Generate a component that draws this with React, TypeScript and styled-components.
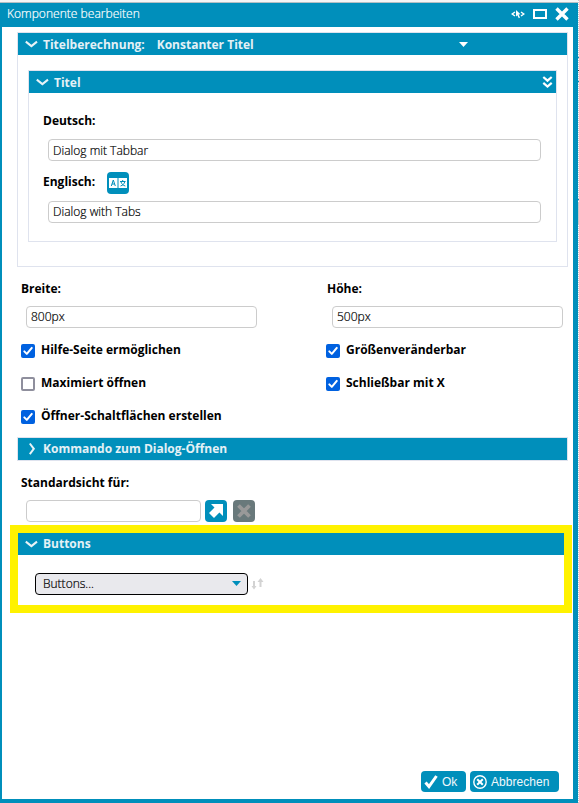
import React from "react";
import styled, { createGlobalStyle } from "styled-components";

const BLUE = "#008fbb";

const GlobalStyle = createGlobalStyle`
  * { box-sizing: border-box; }
  body { margin: 0; background: #fff; overflow: hidden; }
  svg { display: block; flex: none; }
`;

const Page = styled.div`
  display: flex;
  width: 579px;
  height: 803px;
  font-family: "Open Sans", "Noto Sans", sans-serif;
  font-size: 12px;
  color: #000;
`;

const Dialog = styled.div`
  display: flex;
  flex-direction: column;
  width: 578px;
  height: 803px;
  border-top: 2px solid #f5f5f5;
`;

const PageEdge = styled.div`
  width: 1px;
  background:
    linear-gradient(#333, #333) 0 70px / 1px 1px no-repeat,
    linear-gradient(${BLUE}, ${BLUE}) 0 57px / 1px 1px no-repeat,
    linear-gradient(${BLUE}, ${BLUE}) 0 81px / 1px 1px no-repeat,
    linear-gradient(${BLUE}, ${BLUE}) 0 199px / 1px 1px no-repeat,
    linear-gradient(#c8c8c8, #c8c8c8) 0 202px / 1px 23px no-repeat,
    repeating-linear-gradient(#c4c8ca 0 1px, #fff 1px 2px);
`;

const TitleBar = styled.header`
  display: flex;
  align-items: center;
  height: 25px;
  padding: 0 2px 0 7px;
  border-top: 1px solid #b5bfc3;
  background: ${BLUE};
  color: #fff;
`;

const TitleText = styled.span`
  flex: 1;
  line-height: 16px;
  margin-top: -3px;
  font-weight: 300;
  letter-spacing: 0.03px;
  -webkit-text-stroke: 0.2px #fff;
  white-space: nowrap;
`;

const WindowIcons = styled.div`
  display: flex;
  align-items: center;
  gap: 7px;
  margin-top: -3px;
`;

const Body = styled.main`
  display: flex;
  flex-direction: column;
  flex: 1;
  padding: 5px 5px 7px 15px;
  border: solid ${BLUE};
  border-width: 0 5px 4px 2px;
  background: #fff;
`;

const Group = styled.section<{ $height: number }>`
  flex: none;
  height: ${(p) => p.$height}px;
  border: 1px solid #dfe3ee;
`;

const GroupHeader = styled.div`
  display: flex;
  align-items: center;
  height: 22px;
  padding: 0 3px 0 7px;
  background: ${BLUE};
  color: #e4f1f6;
`;

const HeaderText = styled.span<{ $gap?: number; $drop?: number; $spacing?: number }>`
  margin-left: ${(p) => p.$gap ?? 5}px;
  padding-top: ${(p) => p.$drop ?? 2}px;
  font-weight: 700;
  line-height: 16px;
  letter-spacing: ${(p) => p.$spacing ?? 0}px;
  white-space: nowrap;
`;

const Spacer = styled.div`
  flex: 1;
`;

const HeaderMenu = styled.div`
  margin: 0 96px 0 auto;
`;

const InnerArea = styled.div`
  padding: 15px 10px 0;
`;

const Fields = styled.div`
  padding: 20px 15px 0 14px;
`;

const LabelRow = styled.div<{ $height: number; $indent?: number }>`
  display: flex;
  align-items: flex-start;
  height: ${(p) => p.$height}px;
  padding-left: ${(p) => p.$indent ?? 0}px;
`;

const TranslatableRow = styled.div`
  display: flex;
  align-items: center;
  height: 40px;
  padding-top: 4px;
`;

const Label = styled.label<{ $lift?: number; $spacing?: number }>`
  margin-bottom: ${(p) => p.$lift ?? 0}px;
  font-weight: 700;
  line-height: 16px;
  letter-spacing: ${(p) => p.$spacing ?? 0}px;
  white-space: nowrap;
`;

const TextInput = styled.input<{ $width: number; $indent?: number; $lift?: number }>`
  display: block;
  width: ${(p) => p.$width}px;
  height: 22px;
  margin: 0 0 0 ${(p) => p.$indent ?? 5}px;
  padding: 0 4px ${(p) => p.$lift ?? 0}px 4px;
  border: 1px solid #ccc;
  border-radius: 4px;
  outline: 0;
  background: #fff;
  color: #000;
  font: 300 12px "Open Sans", sans-serif;
  -webkit-text-stroke: 0.2px #000;
`;

const IconButton = styled.button<{ $muted?: boolean; $gap?: number }>`
  display: flex;
  align-items: center;
  justify-content: center;
  width: 22px;
  height: 22px;
  margin: 0 0 0 ${(p) => p.$gap ?? 0}px;
  padding: 0;
  border: 0;
  border-radius: 4px;
  background: ${(p) => (p.$muted ? "#69797b" : BLUE)};
`;

const Columns = styled.div`
  display: grid;
  grid-template-columns: 305px 1fr;
  height: 170px;
  padding: 14px 0 0 4px;
`;

const Column = styled.div``;

const CheckRow = styled.div<{ $first?: boolean }>`
  display: flex;
  align-items: flex-start;
  height: 33px;
  margin-top: ${(p) => (p.$first ? 14 : 0)}px;
  gap: 6px;
`;

const CheckBox = styled.span<{ $checked: boolean }>`
  display: flex;
  width: 14px;
  height: 14px;
  margin-top: 2px;
  border: ${(p) => (p.$checked ? "0" : "2px solid #8f8f9d")};
  border-radius: 2px;
  background: ${(p) => (p.$checked ? "#0061e0" : "#fff")};
`;

const DefaultView = styled.div`
  height: 64px;
  padding: 14px 0 0 4px;
`;

const InputRow = styled.div`
  display: flex;
`;

const Highlight = styled.section`
  flex: none;
  height: 88px;
  margin: 0 -4px 0 -7px;
  border: 8px solid #fff200;
`;

const SelectRow = styled.div`
  display: flex;
  align-items: center;
  padding: 18px 0 0 17px;
`;

const SelectBox = styled.button`
  display: flex;
  align-items: center;
  justify-content: space-between;
  width: 213px;
  height: 22px;
  padding: 0 6px 2px 7px;
  border: 1px solid #000;
  border-radius: 4px;
  background: #e9e9ed;
  color: #000;
  font: 300 12px "Open Sans", sans-serif;
  -webkit-text-stroke: 0.2px #000;
`;

const Footer = styled.footer`
  display: flex;
  justify-content: flex-end;
  gap: 4px;
  margin-top: auto;
  padding-right: 9px;
`;

const ActionButton = styled.button<{ $width: number; $spacing?: number }>`
  display: flex;
  align-items: center;
  gap: 4px;
  width: ${(p) => p.$width}px;
  height: 21px;
  padding: 0 0 0 3px;
  border: 0;
  border-radius: 4px;
  background: ${BLUE};
  color: #f0f8fb;
  font: 12px "Liberation Sans", Arial, sans-serif;
  letter-spacing: ${(p) => p.$spacing ?? 0}px;
  white-space: nowrap;
`;

const Chevron = ({ closed }: { closed?: boolean }) => (
  <svg width="13" height="14" viewBox="0 0 13 14" fill="none" stroke="#e8f3f7" strokeWidth="2">
    <path d={closed ? "M4.8 1.5l4 5.3-4 5.3" : "M.8 4.6l5.6 4.5L12 4.6"} />
  </svg>
);

const Triangle = ({ color }: { color: string }) => (
  <svg width="9" height="5" viewBox="0 0 9 5">
    <path d="M0 0h9L4.5 5z" fill={color} />
  </svg>
);

const Check = ({ label, checked = true, first }: { label: string; checked?: boolean; first?: boolean }) => (
  <CheckRow $first={first}>
    <CheckBox $checked={checked} role="checkbox" aria-checked={checked}>
      {checked && (
        <svg width="14" height="14" viewBox="0 0 14 14" fill="none" stroke="#fff" strokeWidth="2" strokeLinecap="round" strokeLinejoin="round">
          <path d="M3.3 7.4l2.5 2.5 5-6" />
        </svg>
      )}
    </CheckBox>
    <Label>{label}</Label>
  </CheckRow>
);

export default function App() {
  return (
    <>
      <GlobalStyle />
      <Page>
        <Dialog>
          <TitleBar>
            <TitleText>Komponente bearbeiten</TitleText>
            <WindowIcons>
              <svg width="14" height="10" viewBox="0 0 14 10">
                <path d="M4 3L1.200 5 4 7M10 3l2.800 2L10 7" fill="none" stroke="#fff" strokeWidth="1.400" />
                <path d="M5 1l4.500 4.200-1.900.3L9 8.600l-1.200.6-1.400-3L5 7.500z" fill="#fff" />
              </svg>
              <svg width="44" height="14" viewBox="0 0 44 14" fill="none" stroke="#fff">
                <path d="M2 3h12v8H2z" strokeWidth="2" />
                <path d="M24.500 1.500l11 11m0-11l-11 11" strokeWidth="3.400" />
              </svg>
            </WindowIcons>
          </TitleBar>
          <Body>
            <Group $height={235}>
              <GroupHeader>
                <Chevron />
                <HeaderText>Titelberechnung:</HeaderText>
                <HeaderText $gap={12}>Konstanter Titel</HeaderText>
                <HeaderMenu>
                  <Triangle color="#fff" />
                </HeaderMenu>
              </GroupHeader>
              <InnerArea>
                <Group $height={172}>
                  <GroupHeader>
                    <Chevron />
                    <HeaderText>Titel</HeaderText>
                    <Spacer />
                    <svg width="11" height="14" viewBox="0 0 11 14" fill="none" stroke="#fff" strokeWidth="2.200">
                      <path d="M1.300 2l4.200 3.700L9.700 2M1.300 7.800l4.200 3.700 4.200-3.700" />
                    </svg>
                  </GroupHeader>
                  <Fields>
                    <LabelRow $height={26}>
                      <Label>Deutsch:</Label>
                    </LabelRow>
                    <TextInput $width={493} defaultValue="Dialog mit Tabbar" />
                    <TranslatableRow>
                      <Label $lift={2}>Englisch:</Label>
                      <IconButton $gap={12}>
                        <svg width="18" height="10" viewBox="0 0 18 10" fill="none" stroke={BLUE}>
                          <path d="M0 0h8.500v10H0zM9.500 0H18v10H9.500z" fill="#fff" stroke="none" />
                          <path d="M2.300 8l2-6 2 6M3 6h2.700M11 3.500h5.500M13.700 2v1.500M15.800 3.700c-.8 2.500-2 3.600-4.300 4.300M12 4c.8 2.200 2.200 3.400 4.300 4" />
                        </svg>
                      </IconButton>
                    </TranslatableRow>
                    <TextInput $width={493} $lift={2} defaultValue="Dialog with Tabs" />
                  </Fields>
                </Group>
              </InnerArea>
            </Group>
            <Columns>
              <Column>
                <LabelRow $height={25}>
                  <Label>Breite:</Label>
                </LabelRow>
                <TextInput $width={231} $lift={2} defaultValue="800px" />
                <Check first label="Hilfe-Seite ermöglichen" />
                <Check label="Maximiert öffnen" checked={false} />
                <Check label="Öffner-Schaltflächen erstellen" />
              </Column>
              <Column>
                <LabelRow $height={25} $indent={1}>
                  <Label>Höhe:</Label>
                </LabelRow>
                <TextInput $width={231} $indent={6} $lift={2} defaultValue="500px" />
                <Check first label="Größenveränderbar" />
                <Check label="Schließbar mit X" />
              </Column>
            </Columns>
            <Group $height={24}>
              <GroupHeader>
                <Chevron closed />
                <HeaderText $drop={0}>Kommando zum Dialog-Öffnen</HeaderText>
              </GroupHeader>
            </Group>
            <DefaultView>
              <LabelRow $height={25}>
                <Label>Standardsicht für:</Label>
              </LabelRow>
              <InputRow>
                <TextInput $width={175} />
                <IconButton $gap={4}>
                  <svg width="16" height="16" viewBox="0 0 16 16">
                    <path d="M3 1h12v12l-3.600-3.400L6 15 1 10l5.500-5.400z" fill="#fff" />
                  </svg>
                </IconButton>
                <IconButton $muted $gap={6}>
                  <svg width="14" height="14" viewBox="0 0 14 14">
                    <path d="M1.500 1.500l11 11m0-11l-11 11" stroke="#999" strokeWidth="3.800" />
                  </svg>
                </IconButton>
              </InputRow>
            </DefaultView>
            <Highlight>
              <GroupHeader>
                <Chevron />
                <HeaderText $drop={0}>Buttons</HeaderText>
              </GroupHeader>
              <SelectRow>
                <SelectBox>
                  Buttons...
                  <Triangle color={BLUE} />
                </SelectBox>
                <svg width="16" height="14" viewBox="0 0 16 14" fill="#d3d3d3">
                  <path d="M5 4h2v5h1.500L6 12.500 3.500 9H5zM11.500 10V5H9.500L12.500 1l3 4H13.500v5z" />
                </svg>
              </SelectRow>
            </Highlight>
            <Footer>
              <ActionButton $width={45}>
                <svg width="14" height="15" viewBox="0 0 14 15">
                  <path d="M1.500 8.500l3.500 4L12.500 2" fill="none" stroke="#fff" strokeWidth="3" />
                </svg>
                Ok
              </ActionButton>
              <ActionButton $width={89} $spacing={0.05}>
                <svg width="14" height="14" viewBox="0 0 14 14" fill="none" stroke="#fff">
                  <circle cx="7" cy="7" r="6.200" strokeWidth="1.400" />
                  <path d="M4.200 4.200l5.600 5.600m0-5.600l-5.600 5.600" strokeWidth="2" />
                </svg>
                Abbrechen
              </ActionButton>
            </Footer>
          </Body>
        </Dialog>
        <PageEdge />
      </Page>
    </>
  );
}
